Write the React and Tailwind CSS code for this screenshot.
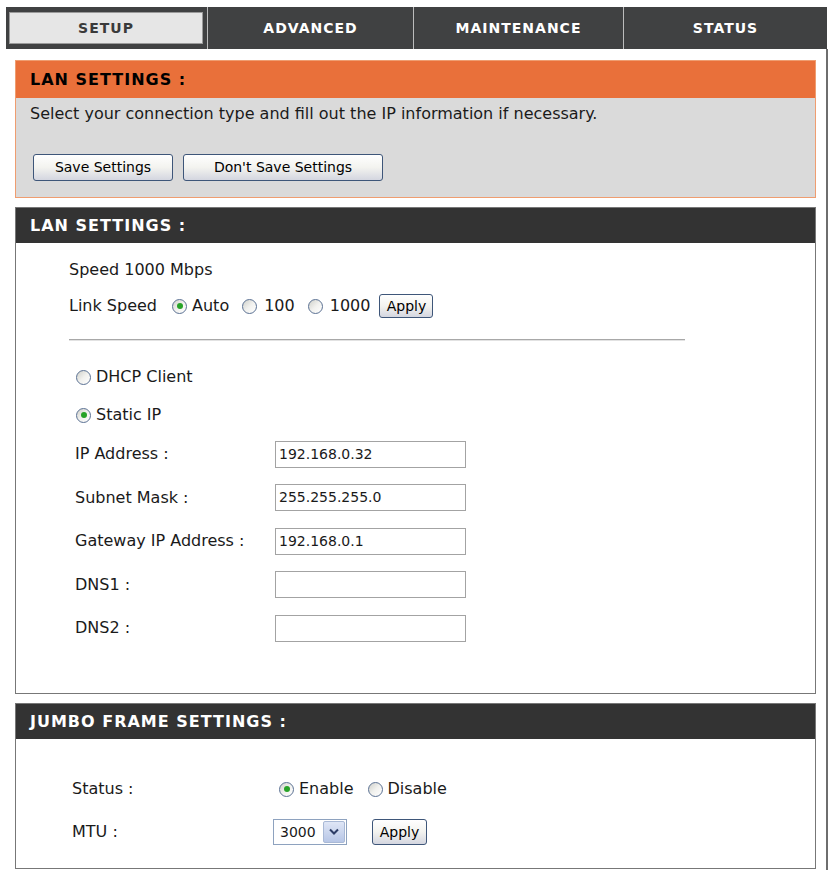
import React from 'react';

const Radio = ({ checked }) => (
    <span className="inline-flex h-[15px] w-[15px] shrink-0 items-center justify-center rounded-full border border-[#5b7193] bg-gradient-to-br from-[#cfd0ca] via-[#f1f1ee] to-white">
        {checked && <span className="h-[6px] w-[6px] rounded-full bg-[#27a327]" />}
    </span>
);

const XpButton = ({ children, className = '' }) => (
    <button className={`flex items-center justify-center rounded-[3px] border border-[#3e5679] bg-gradient-to-b from-white via-[#f3f3ef] to-[#d4d6e0] text-[14px] text-black ${className}`}>
        {children}
    </button>
);

const Field = ({ label, value }) => (
    <div className="flex h-[28px] items-center">
        <span className="w-[200px]">{label}</span>
        <div className="flex h-[27px] w-[191px] items-center border border-[#a3a3a3] bg-white px-[3px] text-[14px]">{value}</div>
    </div>
);

const tabs = [
    { name: 'SETUP', w: 'w-[201px]' },
    { name: 'ADVANCED', w: 'w-[206px]' },
    { name: 'MAINTENANCE', w: 'w-[210px]' },
    { name: 'STATUS', w: 'w-[204px]' },
];

const DarkHeader = ({ children }) => (
    <div className="flex h-[35px] items-center bg-[#333333] pl-[14px] text-[16px] font-bold tracking-[1px] text-white">{children}</div>
);

export default function App() {
    return (
        <div className="w-[829px] min-h-[870px] bg-white font-['DejaVu_Sans',sans-serif] text-[16px] text-[#1a1a1a]">
            {/* Top tabs */}
            <div className="ml-[6px] flex h-[42px] w-[821px] pt-0 mt-[7px]">
                {tabs.map((t, i) =>
                    i === 0 ? (
                        <div key={t.name} className={`${t.w} h-full bg-[#404142] pt-[5px] pb-[5px] pl-[3px] pr-[4px]`}>
                            <div className="flex h-full items-center justify-center border border-[#9a9a9a] bg-[#e6e6e6] text-[14px] font-bold tracking-[1px] text-[#3a3a3a]">
                                {t.name}
                            </div>
                        </div>
                    ) : (
                        <div key={t.name} className={`${t.w} flex h-full items-center justify-center border-l border-[#bcbcbc] bg-[#404142] text-[14px] font-bold tracking-[1px] text-white`}>
                            {t.name}
                        </div>
                    )
                )}
            </div>

            {/* Content area */}
            <div className="w-[828px] min-h-[821px] border-r-2 border-[#6e6e6e] pl-[15px] pr-[10px] pt-[11px] pb-[3px]">
                {/* Orange notice box */}
                <div className="border border-[#ef9d70] bg-[#dadada]">
                    <div className="flex h-[37px] items-center bg-[#e9703a] pl-[14px] text-[16px] font-bold tracking-[1px] text-black">
                        LAN SETTINGS :
                    </div>
                    <div className="px-[14px] pt-[4px] pb-[16px]">
                        <p className="h-[24px] leading-[24px]">Select your connection type and fill out the IP information if necessary.</p>
                        <div className="mt-[28px] flex gap-[10px] pl-[3px]">
                            <XpButton className="h-[27px] w-[140px]">Save Settings</XpButton>
                            <XpButton className="h-[27px] w-[200px]">Don't Save Settings</XpButton>
                        </div>
                    </div>
                </div>

                {/* LAN settings */}
                <div className="mt-[9px] border border-[#777777]">
                    <DarkHeader>LAN SETTINGS :</DarkHeader>
                    <div className="pl-[53px] pt-[15px] pb-[51px]">
                        <div className="flex h-[24px] items-center">Speed 1000 Mbps</div>
                        <div className="mt-[12px] flex h-[24px] items-center">
                            <span>Link Speed</span>
                            <span className="ml-[15px] flex items-center gap-[5px]"><Radio checked />Auto</span>
                            <span className="ml-[13px] flex items-center gap-[7px]"><Radio />100</span>
                            <span className="ml-[13px] flex items-center gap-[7px]"><Radio />1000</span>
                            <XpButton className="ml-[9px] h-[24px] w-[54px]">Apply</XpButton>
                        </div>
                        <div className="mt-[21px] h-[2px] w-[616px] border-t border-[#a8a8a8] border-b border-b-[#e2e2e2]" />
                        <div className="mt-[24px] ml-[7px] flex h-[24px] items-center gap-[5px]"><Radio />DHCP Client</div>
                        <div className="mt-[14px] ml-[7px] flex h-[24px] items-center gap-[5px]"><Radio checked />Static IP</div>
                        <div className="mt-[13px] ml-[6px] flex flex-col gap-[15.5px]">
                            <Field label="IP Address :" value="192.168.0.32" />
                            <Field label="Subnet Mask :" value="255.255.255.0" />
                            <Field label="Gateway IP Address :" value="192.168.0.1" />
                            <Field label="DNS1 :" value="" />
                            <Field label="DNS2 :" value="" />
                        </div>
                    </div>
                </div>

                {/* Jumbo frame */}
                <div className="mt-[9px] border border-[#777777]">
                    <DarkHeader>JUMBO FRAME SETTINGS :</DarkHeader>
                    <div className="pl-[56px] pt-[37px] pb-[23px]">
                        <div className="flex h-[26px] items-center">
                            <span className="w-[207px]">Status :</span>
                            <span className="flex items-center gap-[5px]"><Radio checked />Enable</span>
                            <span className="ml-[14px] flex items-center gap-[5px]"><Radio />Disable</span>
                        </div>
                        <div className="mt-[17px] flex h-[26px] items-center">
                            <span className="w-[201px]">MTU :</span>
                            <div className="flex h-[26px] w-[74px] items-center border border-[#8ea2bf] bg-white pl-[6px] text-[14px]">
                                <span className="flex-1">3000</span>
                                <span className="m-[1px] flex h-[22px] w-[22px] items-center justify-center rounded-[2px] border border-[#a9b9d6] bg-gradient-to-b from-[#dfe6f6] to-[#b7c6e6]">
                                    <svg width="10" height="8" viewBox="0 0 10 8"><path d="M1 1.5 L5 5.5 L9 1.5" stroke="#2d3d66" strokeWidth="2" fill="none" /></svg>
                                </span>
                            </div>
                            <XpButton className="ml-[25px] h-[26px] w-[55px]">Apply</XpButton>
                        </div>
                    </div>
                </div>
            </div>
        </div>
    );
}
